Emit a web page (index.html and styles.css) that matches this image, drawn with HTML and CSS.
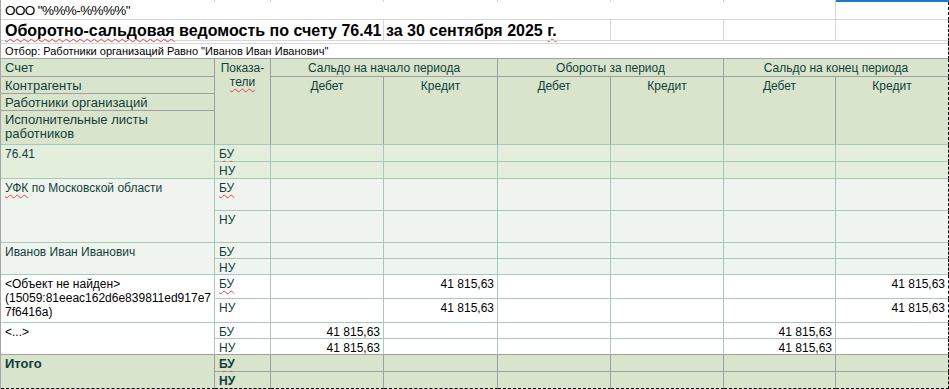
FILE: index.html
```html
<!DOCTYPE html>
<html lang="ru">
<head>
<meta charset="utf-8">
<title>Оборотно-сальдовая ведомость</title>
<link rel="stylesheet" href="styles.css">
</head>
<body>
<div class="sheet">
  <!-- row above -->
  <div class="cell pre"></div><div class="cell pre"></div><div class="cell pre"></div><div class="cell pre"></div>
  <div class="cell pre"></div><div class="cell pre"></div><div class="cell pre"></div><div class="cell pre sel"></div>

  <div class="cell g cs7 org">ООО "%%%-%%%%"</div><div class="cell g edge"></div>

  <div class="cell g cs3 title"><span class="sp">Оборотно-сальдовая</span> ведомость по счету 76.41 за 30 сентября 2025 <span class="sp">г.</span></div>
  <div class="cell g cs2"></div><div class="cell g"></div><div class="cell g"></div><div class="cell g edge"></div>

  <div class="cell g cs8 edge"></div>

  <div class="cell cs8 filter edge">Отбор: Работники организаций Равно "Иванов Иван Иванович"</div>

  <!-- header -->
  <div class="cell hd big">Счет</div>
  <div class="cell hd ctr rs4 hb">Показа-<br><span class="sp">тели</span></div>
  <div class="cell hd ctr cs2">Сальдо на начало периода</div>
  <div class="cell hd ctr cs2">Обороты за период</div>
  <div class="cell hd ctr cs2 edge">Сальдо на конец периода</div>

  <div class="cell hd big">Контрагенты</div>
  <div class="cell hd ctr rs3 hb">Дебет</div>
  <div class="cell hd ctr rs3 hb">Кредит</div>
  <div class="cell hd ctr rs3 hb">Дебет</div>
  <div class="cell hd ctr rs3 hb">Кредит</div>
  <div class="cell hd ctr rs3 hb">Дебет</div>
  <div class="cell hd ctr rs3 hb edge">Кредит</div>

  <div class="cell hd big">Работники организаций</div>
  <div class="cell hd hb big">Исполнительные листы<br>работников</div>

  <!-- 76.41 -->
  <div class="cell l1 rs2">76.41</div>
  <div class="cell l1"><span class="sp">БУ</span></div>
  <div class="cell l1"></div><div class="cell l1"></div><div class="cell l1"></div><div class="cell l1"></div><div class="cell l1"></div><div class="cell l1 edge"></div>
  <div class="cell l1">НУ</div>
  <div class="cell l1"></div><div class="cell l1"></div><div class="cell l1"></div><div class="cell l1"></div><div class="cell l1"></div><div class="cell l1 edge"></div>

  <!-- УФК -->
  <div class="cell l2 rs2"><span class="sp">УФК</span> по Московской области</div>
  <div class="cell l2"><span class="sp">БУ</span></div>
  <div class="cell l2"></div><div class="cell l2"></div><div class="cell l2"></div><div class="cell l2"></div><div class="cell l2"></div><div class="cell l2 edge"></div>
  <div class="cell l2">НУ</div>
  <div class="cell l2"></div><div class="cell l2"></div><div class="cell l2"></div><div class="cell l2"></div><div class="cell l2"></div><div class="cell l2 edge"></div>

  <!-- Иванов -->
  <div class="cell l2 rs2">Иванов Иван Иванович</div>
  <div class="cell l2"><span class="sp">БУ</span></div>
  <div class="cell l2"></div><div class="cell l2"></div><div class="cell l2"></div><div class="cell l2"></div><div class="cell l2"></div><div class="cell l2 edge"></div>
  <div class="cell l2">НУ</div>
  <div class="cell l2"></div><div class="cell l2"></div><div class="cell l2"></div><div class="cell l2"></div><div class="cell l2"></div><div class="cell l2 edge"></div>

  <!-- Объект не найден -->
  <div class="cell l3 rs2 blk">&lt;Объект не найден&gt;<br>(15059:81eeac162d6e839811ed917e7<br>7f6416a)</div>
  <div class="cell l3"><span class="sp">БУ</span></div>
  <div class="cell l3"></div><div class="cell l3 num">41 815,63</div><div class="cell l3"></div><div class="cell l3"></div><div class="cell l3"></div><div class="cell l3 num edge">41 815,63</div>
  <div class="cell l3">НУ</div>
  <div class="cell l3"></div><div class="cell l3 num">41 815,63</div><div class="cell l3"></div><div class="cell l3"></div><div class="cell l3"></div><div class="cell l3 num edge">41 815,63</div>

  <!-- <...> -->
  <div class="cell l3 rs2 blk last">&lt;...&gt;</div>
  <div class="cell l3"><span class="sp">БУ</span></div>
  <div class="cell l3 num">41 815,63</div><div class="cell l3"></div><div class="cell l3"></div><div class="cell l3"></div><div class="cell l3 num">41 815,63</div><div class="cell l3 edge"></div>
  <div class="cell l3 last">НУ</div>
  <div class="cell l3 num last">41 815,63</div><div class="cell l3 last"></div><div class="cell l3 last"></div><div class="cell l3 last"></div><div class="cell l3 num last">41 815,63</div><div class="cell l3 last edge"></div>

  <!-- Итого -->
  <div class="cell tot rs2 bold big pb">Итого</div>
  <div class="cell tot bold"><span class="sp">БУ</span></div>
  <div class="cell tot"></div><div class="cell tot"></div><div class="cell tot"></div><div class="cell tot"></div><div class="cell tot"></div><div class="cell tot edge"></div>
  <div class="cell tot bold pb">НУ</div>
  <div class="cell tot pb"></div><div class="cell tot pb"></div><div class="cell tot pb"></div><div class="cell tot pb"></div><div class="cell tot pb"></div><div class="cell tot pb edge"></div>
</div>
</body>
</html>
```

FILE: styles.css
```css
* {
  box-sizing: border-box;
}

body {
  margin: 0;
  background: #ffffff;
  font-family: "Liberation Sans", Arial, sans-serif;
  font-size: 12px;
  color: #000;
}

.sheet {
  display: grid;
  width: 949px;
  grid-template-columns: 214px 56px 113px 114px 113px 113px 112px 113px;
  grid-template-rows: 2px 18px 21px 2px 16px 18px 17px 17px 34px 17px 17px 32px 32px 16px 16px 24px 24px 16px 16px 17px 17px;
  border-left: 1px solid #a6a6a6;
}

.cell {
  min-width: 0;
  padding: 2px 3px 0 4px;
  line-height: 14px;
  white-space: nowrap;
  border-right: 1px solid #a7c9bc;
  border-bottom: 1px solid #a7c9bc;
  color: #123f3b;
}

.cs2 { grid-column: span 2; }
.cs3 { grid-column: span 3; }
.cs7 { grid-column: span 7; }
.cs8 { grid-column: span 8; }
.rs2 { grid-row: span 2; }
.rs3 { grid-row: span 3; }
.rs4 { grid-row: span 4; }

/* plain sheet grid */
.pre {
  padding: 0;
  border-bottom: 0;
  border-right-color: #d0d0d0;
}
.pre.sel {
  background: #1f78d1;
  border-right: 0;
}
.g {
  border-right-color: #d6d6d6;
  border-bottom-color: #d6d6d6;
  color: #000;
}
.org {
  padding-top: 1px;
  font-size: 13.5px;
  letter-spacing: -0.6px;
  line-height: 15px;
}
.title {
  font-size: 16px;
  font-weight: bold;
  line-height: 19px;
  padding-top: 1px;
  color: #000;
}
.filter {
  font-size: 11px;
  line-height: 13px;
  padding-top: 2px;
  color: #000;
  border-bottom-color: #a0a0a0;
  border-right-color: #d6d6d6;
}

/* header */
.hd {
  background: #d8e4cc;
  border-right-color: #a0a0a0;
  border-bottom-color: #a0a0a0;
}
.hd.hb {
  border-bottom-color: #a7c9bc;
}
.big {
  font-size: 13px;
}
.ctr {
  text-align: center;
  padding-left: 2px;
  padding-right: 2px;
}

/* body levels */
.l1 { background: #e3eedc; }
.l2 { background: #eff5ee; }
.l3 { background: #ffffff; }
.blk { color: #000; }
.num {
  text-align: right;
  color: #000;
  padding-right: 3px;
}
.last { border-bottom-color: #a0a0a0; }

.tot {
  background: #d8e4cc;
  border-right-color: #a0a0a0;
  border-bottom-color: #a0a0a0;
}
.bold { font-weight: bold; }

.pb { border-bottom: 1px dashed #000; }
.edge { border-right: 1px dashed #000; }

.sp {
  text-decoration: underline wavy #e2474a;
  text-decoration-thickness: 1px;
  text-underline-offset: 2px;
  text-decoration-skip-ink: none;
}
```
